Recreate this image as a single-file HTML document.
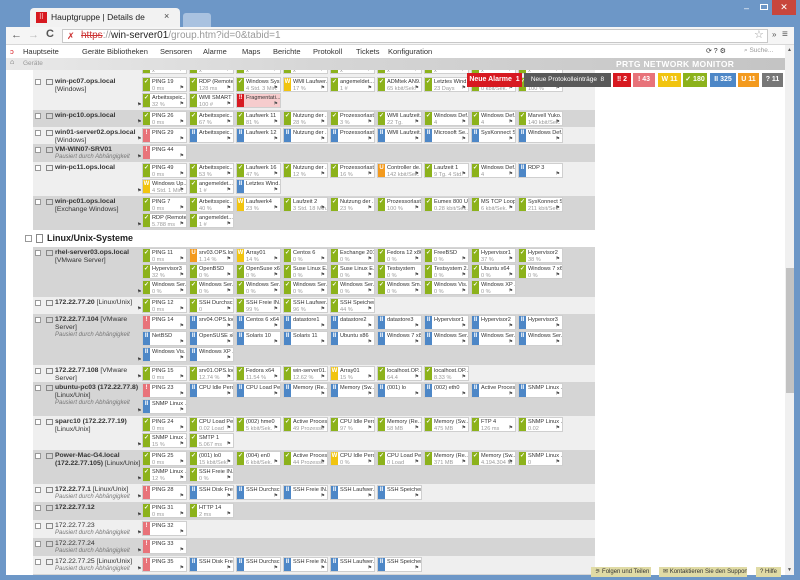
<!DOCTYPE html>
<html><head><meta charset="utf-8"><style>
*{box-sizing:border-box;margin:0;padding:0}
body{width:800px;height:580px;overflow:hidden;background:#6d97c7;font-family:"Liberation Sans",sans-serif;position:relative}
.abs{position:absolute}
#win{position:absolute;left:6px;top:27px;width:788px;height:548px;background:#fff;overflow:hidden}
#tb{position:absolute;left:0;top:0;width:788px;height:18px;background:#f5f5f5;border-bottom:1px solid #d8d8d8}
#url{position:absolute;left:56px;top:2px;width:706px;height:14px;background:#fff;border:1px solid #c8c8c8;font-size:10px;line-height:12px;padding-left:18px;color:#999}
#menu{position:absolute;left:0;top:18px;width:779px;height:13px;background:#fff;font-size:7.5px;color:#333}
#menu span{position:absolute;top:2px;white-space:nowrap}
#bc{position:absolute;left:0;top:31px;width:779px;height:12px;background:linear-gradient(90deg,#e9e9e9 0%,#d6d6d6 40%,#c4c4c4 100%)}
#content{position:absolute;left:0;top:43px;width:779px;height:505px;overflow:hidden;background:#fff}
.d{position:absolute;left:27px;width:562px}
.L{background:#efefef}.D{background:#d5d5d5}
.n{position:absolute;left:22px;top:2px;font-size:6.8px;line-height:8px;color:#333;font-weight:bold;white-space:nowrap}
.n i{font-weight:normal;font-style:italic;color:#777;font-size:6px;display:block;line-height:7.5px}
.n s{text-decoration:none;font-weight:normal}
.x{position:absolute;left:2px;top:3px;width:6px;height:6px;border:1px solid #999;background:#fff}
.ic{position:absolute;left:13px;top:3px;width:7px;height:6px;border:1px solid #888}
.fl{position:absolute;left:104px;bottom:2px;font-size:5px;color:#444}
.ts{position:absolute;left:109px;top:1px;width:430px;font-size:0;line-height:0}
.t{position:relative;display:inline-block;width:45px;height:15px;background:#fff;border:1px solid #cfcfcf;margin:0 2px 1px 0;vertical-align:top;overflow:hidden;font-size:5.6px;line-height:6.5px;color:#333;padding:1px 0 0 9px;white-space:nowrap}
.t b{position:absolute;left:0;top:0;width:7px;height:15px;color:#fff;font-size:6px;text-align:center;line-height:8px}
.t u{text-decoration:none;color:#9a9a9a;display:block}
.t::after{content:"⚑";position:absolute;right:2px;bottom:0;font-size:5px;color:#555}
.g b{background:#8cb21b}.b b{background:#4d87c7}.r b{background:#e8737a}.y b{background:#f1c40f}.o b{background:#f39a1e}.R b{background:#d71920}.R{background:#f6cccd}
.bd{position:absolute;top:73px;height:14px;font-size:7px;line-height:14px;color:#fff;text-align:center;font-weight:bold;white-space:nowrap;overflow:hidden}
.fb{position:absolute;top:567px;height:10px;background:#e0dba5;font-size:6px;line-height:10px;color:#333;padding:0 4px;white-space:nowrap;overflow:hidden}
</style></head><body>
<div class="abs" style="left:30px;top:8px;width:150px;height:20px;background:#f2f2f2;border-radius:4px 4px 0 0"></div>
<div class="abs" style="left:36px;top:12px;width:11px;height:11px;background:#d71920;color:#fff;font-size:7px;text-align:center;line-height:11px">⠿</div>
<div class="abs" style="left:51px;top:12px;font-size:8.5px;color:#222">Hauptgruppe | Details de</div>
<div class="abs" style="left:164px;top:11px;font-size:9px;color:#444">×</div>
<div class="abs" style="left:183px;top:13px;width:28px;height:14px;background:#a9c2e0;border-radius:3px 3px 0 0"></div>
<div class="abs" style="left:744px;top:3px;font-size:9px;color:#fff">–</div>
<div class="abs" style="left:760px;top:4px;width:8px;height:6px;border:1px solid #fff"></div>
<div class="abs" style="left:772px;top:0;width:24px;height:15px;background:#c8463c;color:#fff;font-size:9px;text-align:center;line-height:15px">✕</div>
<div id="win">
 <div id="tb">
  <div class="abs" style="left:5px;top:2px;font-size:11px;color:#555">←</div>
  <div class="abs" style="left:22px;top:2px;font-size:11px;color:#bbb">→</div>
  <div class="abs" style="left:40px;top:1px;font-size:11px;color:#555;font-weight:bold">C</div>
  <div id="url"><span style="position:absolute;left:4px;top:0;color:#c33;font-size:9px">✗</span><span style="color:#c33;text-decoration:line-through">https</span>://<span style="color:#222">win-server01</span>/group.htm?id=0&amp;tabid=1</div>
  <div class="abs" style="left:748px;top:1px;font-size:11px;color:#999">☆</div>
  <div class="abs" style="left:766px;top:3px;font-size:8px;color:#555">»</div>
  <div class="abs" style="left:776px;top:2px;font-size:10px;color:#555">≡</div>
 </div>
 <div id="menu">
  <span style="left:4px;color:#d71920">ↄ</span>
  <span style="left:17px">Hauptseite</span><span style="left:76px">Geräte</span><span style="left:101px">Bibliotheken</span><span style="left:154px">Sensoren</span><span style="left:197px">Alarme</span><span style="left:236px">Maps</span><span style="left:267px">Berichte</span><span style="left:307px">Protokoll</span><span style="left:350px">Tickets</span><span style="left:382px">Konfiguration</span>
  <span style="left:700px;font-size:7px">⟳ ? ⚙</span>
  <span style="left:738px;font-size:6.5px;color:#999">⌕ Suche...</span>
 </div>
 <div id="bc">
  <span class="abs" style="left:4px;top:1px;font-size:7px;color:#555">⌂</span>
  <span class="abs" style="left:17px;top:2px;font-size:6.5px;color:#999">Geräte</span>
  <span class="abs" style="left:610px;top:1px;font-size:8.5px;color:#fff;font-weight:bold;letter-spacing:.3px">PRTG NETWORK MONITOR</span>
 </div>
 <div id="content">
  <div class="d L" style="top:-28px;height:34px"><div class="ts">
   <div class="t g"><b>✓</b>x<br><u>x</u></div><div class="t g"><b>✓</b>x<br><u>x</u></div><div class="t g"><b>✓</b>x<br><u>x</u></div><div class="t g"><b>✓</b>x<br><u>x</u></div><div class="t g"><b>✓</b>x<br><u>x</u></div><div class="t g"><b>✓</b>x<br><u>x</u></div><div class="t g"><b>✓</b>x<br><u>x</u></div><div class="t g"><b>✓</b>x<br><u>x</u></div><div class="t g"><b>✓</b>x<br><u>x</u></div>
   <div class="t g"><b>✓</b>x<br><u>x</u></div><div class="t g"><b>✓</b>x<br><u>x</u></div><div class="t g"><b>✓</b>x<br><u>x</u></div><div class="t g"><b>✓</b>x<br><u>x</u></div><div class="t g"><b>✓</b>x<br><u>x</u></div><div class="t g"><b>✓</b>x<br><u>x</u></div><div class="t g"><b>✓</b>x<br><u>x</u></div><div class="t g"><b>✓</b>x<br><u>x</u></div><div class="t g"><b>✓</b>x<br><u>x</u></div>
  </div></div>

  <div class="d L" style="top:6px;height:34px"><span class="x"></span><span class="ic"></span><div class="n">win-pc07.ops.local<br><s>[Windows]</s></div><span class="fl">⚑</span><div class="ts">
   <div class="t g"><b>✓</b>PING 19<u>0 ms</u></div><div class="t g"><b>✓</b>RDP (Remote...<u>128 ms</u></div><div class="t g"><b>✓</b>Windows Sys...<u>4 Std. 3 Min.</u></div><div class="t y"><b>W</b>WMI Laufwer...<u>17 %</u></div><div class="t g"><b>✓</b>angemeldet...<u>1 #</u></div><div class="t g"><b>✓</b>ADMtek AN9...<u>65 kbit/Sek.</u></div><div class="t g"><b>✓</b>Letztes Wind...<u>23 Days</u></div><div class="t g"><b>✓</b>Netzwerk<u>0 kbit/Sek.</u></div><div class="t g"><b>✓</b>Verfügbar<u>100 %</u></div>
   <div class="t g"><b>✓</b>Arbeitsspeic...<u>32 %</u></div><div class="t g"><b>✓</b>WMI SMART ...<u>100 #</u></div><div class="t R"><b>‼</b>Fragmentati...<u>&nbsp;</u></div>
  </div></div>

  <div class="d D" style="top:40px;height:17px"><span class="x"></span><span class="ic"></span><div class="n">win-pc10.ops.local</div><span class="fl">⚑</span><div class="ts">
   <div class="t g"><b>✓</b>PING 26<u>0 ms</u></div><div class="t g"><b>✓</b>Arbeitsspeic...<u>67 %</u></div><div class="t g"><b>✓</b>Laufwerk 11<u>81 %</u></div><div class="t g"><b>✓</b>Nutzung der ...<u>28 %</u></div><div class="t g"><b>✓</b>Prozessorlast...<u>3 %</u></div><div class="t g"><b>✓</b>WMI Laufzeit...<u>22 Tg.</u></div><div class="t g"><b>✓</b>Windows Def...<u>4</u></div><div class="t g"><b>✓</b>Windows Def...<u>4</u></div><div class="t g"><b>✓</b>Marvell Yuko...<u>140 kbit/Sek.</u></div>
  </div></div>

  <div class="d L" style="top:57px;height:17px"><span class="x"></span><span class="ic"></span><div class="n">win01-server02.ops.local<br><s>[Windows]</s></div><span class="fl">⚑</span><div class="ts">
   <div class="t r"><b>!</b>PING 29</div><div class="t b"><b>II</b>Arbeitsspeic...</div><div class="t b"><b>II</b>Laufwerk 12</div><div class="t b"><b>II</b>Nutzung der ...</div><div class="t b"><b>II</b>Prozessorlast...</div><div class="t b"><b>II</b>WMI Laufzeit...</div><div class="t b"><b>II</b>Microsoft Se...</div><div class="t b"><b>II</b>SysKonnect S...</div><div class="t b"><b>II</b>Windows Def...</div>
  </div></div>

  <div class="d D" style="top:74px;height:18px"><span class="x"></span><span class="ic"></span><div class="n">VM-WIN07-SRV01<i>Pausiert durch Abhängigkeit</i></div><span class="fl">⚑</span><div class="ts">
   <div class="t r"><b>!</b>PING 44</div>
  </div></div>

  <div class="d L" style="top:92px;height:34px"><span class="x"></span><span class="ic"></span><div class="n">win-pc11.ops.local</div><span class="fl">⚑</span><div class="ts">
   <div class="t g"><b>✓</b>PING 49<u>0 ms</u></div><div class="t g"><b>✓</b>Arbeitsspeic...<u>53 %</u></div><div class="t g"><b>✓</b>Laufwerk 16<u>47 %</u></div><div class="t g"><b>✓</b>Nutzung der ...<u>12 %</u></div><div class="t g"><b>✓</b>Prozessorlast...<u>16 %</u></div><div class="t o"><b>U</b>Controller de...<u>142 kbit/Sek.</u></div><div class="t g"><b>✓</b>Laufzeit 1<u>9 Tg. 4 Std.</u></div><div class="t g"><b>✓</b>Windows Def...<u>4</u></div><div class="t b"><b>II</b>RDP 3</div>
   <div class="t y"><b>W</b>Windows Up...<u>4 Std. 1 Min.</u></div><div class="t g"><b>✓</b>angemeldet...<u>1 #</u></div><div class="t b"><b>II</b>Letztes Wind...</div>
  </div></div>

  <div class="d D" style="top:126px;height:34px"><span class="x"></span><span class="ic"></span><div class="n">win-pc01.ops.local<br><s>[Exchange Windows]</s></div><span class="fl">⚑</span><div class="ts">
   <div class="t g"><b>✓</b>PING 7<u>0 ms</u></div><div class="t g"><b>✓</b>Arbeitsspeic...<u>40 %</u></div><div class="t y"><b>W</b>Laufwerk4<u>23 %</u></div><div class="t g"><b>✓</b>Laufzeit 2<u>3 Std. 18 Min.</u></div><div class="t g"><b>✓</b>Nutzung der ...<u>23 %</u></div><div class="t g"><b>✓</b>Prozessorlast 4<u>100 %</u></div><div class="t g"><b>✓</b>Eumex 800 U...<u>0.28 kbit/Sek.</u></div><div class="t g"><b>✓</b>MS TCP Loop...<u>6 kbit/Sek.</u></div><div class="t g"><b>✓</b>SysKonnect S...<u>211 kbit/Sek.</u></div>
   <div class="t g"><b>✓</b>RDP (Remote...<u>5.788 ms</u></div><div class="t g"><b>✓</b>angemeldet...<u>1 #</u></div>
  </div></div>

  <span class="abs" style="left:19px;top:165px;width:7px;height:7px;border:1px solid #999"></span>
  <span class="abs" style="left:30px;top:164px;width:7px;height:9px;border:1px solid #888"></span>
  <div class="abs" style="left:41px;top:163px;font-size:9px;font-weight:bold;color:#222">Linux/Unix-Systeme</div>

  <div class="d D" style="top:177px;height:50px"><span class="x"></span><span class="ic"></span><div class="n">rhel-server03.ops.local<br><s>[VMware Server]</s></div><span class="fl">⚑</span><div class="ts">
   <div class="t g"><b>✓</b>PING 11<u>0 ms</u></div><div class="t o"><b>U</b>srv03.OPS.local<u>1.14 %</u></div><div class="t y"><b>W</b>Array01<u>14 %</u></div><div class="t g"><b>✓</b>Centos 6<u>0 %</u></div><div class="t g"><b>✓</b>Exchange 2010<u>0 %</u></div><div class="t g"><b>✓</b>Fedora 12 x86<u>0 %</u></div><div class="t g"><b>✓</b>FreeBSD<u>0 %</u></div><div class="t g"><b>✓</b>Hypervisor1<u>37 %</u></div><div class="t g"><b>✓</b>Hypervisor2<u>38 %</u></div>
   <div class="t g"><b>✓</b>Hypervisor3<u>32 %</u></div><div class="t g"><b>✓</b>OpenBSD<u>0 %</u></div><div class="t g"><b>✓</b>OpenSuse x64<u>0 %</u></div><div class="t g"><b>✓</b>Suse Linux E...<u>0 %</u></div><div class="t g"><b>✓</b>Suse Linux E...<u>0 %</u></div><div class="t g"><b>✓</b>Testsystem<u>0 %</u></div><div class="t g"><b>✓</b>Testsystem 2...<u>0 %</u></div><div class="t g"><b>✓</b>Ubuntu x64<u>0 %</u></div><div class="t g"><b>✓</b>Windows 7 x64<u>0 %</u></div>
   <div class="t g"><b>✓</b>Windows Ser...<u>0 %</u></div><div class="t g"><b>✓</b>Windows Ser...<u>0 %</u></div><div class="t g"><b>✓</b>Windows Ser...<u>0 %</u></div><div class="t g"><b>✓</b>Windows Ser...<u>0 %</u></div><div class="t g"><b>✓</b>Windows Ser...<u>0 %</u></div><div class="t g"><b>✓</b>Windows Sm...<u>0 %</u></div><div class="t g"><b>✓</b>Windows Vis...<u>0 %</u></div><div class="t g"><b>✓</b>Windows XP ...<u>0 %</u></div>
  </div></div>

  <div class="d L" style="top:227px;height:17px"><span class="x"></span><span class="ic"></span><div class="n">172.22.77.20 <s>[Linux/Unix]</s></div><span class="fl">⚑</span><div class="ts">
   <div class="t g"><b>✓</b>PING 12<u>0 ms</u></div><div class="t g"><b>✓</b>SSH Durchsc...<u>0</u></div><div class="t g"><b>✓</b>SSH Freie IN...<u>99 %</u></div><div class="t g"><b>✓</b>SSH Laufwer...<u>96 %</u></div><div class="t g"><b>✓</b>SSH Speicher...<u>44 %</u></div>
  </div></div>

  <div class="d D" style="top:244px;height:51px"><span class="x"></span><span class="ic"></span><div class="n">172.22.77.104 <s>[VMware<br>Server]</s><i>Pausiert durch Abhängigkeit</i></div><span class="fl">⚑</span><div class="ts">
   <div class="t r"><b>!</b>PING 14</div><div class="t b"><b>II</b>srv04.OPS.local</div><div class="t b"><b>II</b>Centos 6 x64</div><div class="t b"><b>II</b>datastore1</div><div class="t b"><b>II</b>datastore2</div><div class="t b"><b>II</b>datastore3</div><div class="t b"><b>II</b>Hypervisor1</div><div class="t b"><b>II</b>Hypervisor2</div><div class="t b"><b>II</b>Hypervisor3</div>
   <div class="t b"><b>II</b>NetBSD</div><div class="t b"><b>II</b>OpenSUSE x86</div><div class="t b"><b>II</b>Solaris 10</div><div class="t b"><b>II</b>Solaris 11</div><div class="t b"><b>II</b>Ubuntu x86</div><div class="t b"><b>II</b>Windows 7 x86</div><div class="t b"><b>II</b>Windows Ser...</div><div class="t b"><b>II</b>Windows Ser...</div><div class="t b"><b>II</b>Windows Ser...</div>
   <div class="t b"><b>II</b>Windows Vis...</div><div class="t b"><b>II</b>Windows XP ...</div>
  </div></div>

  <div class="d L" style="top:295px;height:17px"><span class="x"></span><span class="ic"></span><div class="n">172.22.77.108 <s>[VMware<br>Server]</s></div><span class="fl">⚑</span><div class="ts">
   <div class="t g"><b>✓</b>PING 15<u>0 ms</u></div><div class="t g"><b>✓</b>srv01.OPS.local<u>12.74 %</u></div><div class="t g"><b>✓</b>Fedora x64<u>11.54 %</u></div><div class="t g"><b>✓</b>win-server01...<u>12.62 %</u></div><div class="t y"><b>W</b>Array01<u>15 %</u></div><div class="t g"><b>✓</b>localhost.OP...<u>64.4</u></div><div class="t g"><b>✓</b>localhost.OP...<u>8.33 %</u></div>
  </div></div>

  <div class="d D" style="top:312px;height:34px"><span class="x"></span><span class="ic"></span><div class="n">ubuntu-pc03 (172.22.77.8)<br><s>[Linux/Unix]</s><i>Pausiert durch Abhängigkeit</i></div><span class="fl">⚑</span><div class="ts">
   <div class="t r"><b>!</b>PING 23</div><div class="t b"><b>II</b>CPU Idle Perc...</div><div class="t b"><b>II</b>CPU Load Pe...</div><div class="t b"><b>II</b>Memory (Re...</div><div class="t b"><b>II</b>Memory (Sw...</div><div class="t b"><b>II</b>(001) lo</div><div class="t b"><b>II</b>(002) eth0</div><div class="t b"><b>II</b>Active Proces...</div><div class="t b"><b>II</b>SNMP Linux ...</div>
   <div class="t b"><b>II</b>SNMP Linux ...</div>
  </div></div>

  <div class="d L" style="top:346px;height:34px"><span class="x"></span><span class="ic"></span><div class="n">sparc10 (172.22.77.19)<br><s>[Linux/Unix]</s></div><span class="fl">⚑</span><div class="ts">
   <div class="t g"><b>✓</b>PING 24<u>0 ms</u></div><div class="t g"><b>✓</b>CPU Load Pe...<u>0.02 Load</u></div><div class="t g"><b>✓</b>(002) hme0<u>5 kbit/Sek.</u></div><div class="t g"><b>✓</b>Active Proces...<u>49 Prozesse</u></div><div class="t g"><b>✓</b>CPU Idle Perc...<u>97 %</u></div><div class="t g"><b>✓</b>Memory (Re...<u>58 MB</u></div><div class="t g"><b>✓</b>Memory (Sw...<u>475 MB</u></div><div class="t g"><b>✓</b>FTP 4<u>126 ms</u></div><div class="t g"><b>✓</b>SNMP Linux ...<u>0.02</u></div>
   <div class="t g"><b>✓</b>SNMP Linux ...<u>15 %</u></div><div class="t g"><b>✓</b>SMTP 1<u>5.067 ms</u></div>
  </div></div>

  <div class="d D" style="top:380px;height:34px"><span class="x"></span><span class="ic"></span><div class="n">Power-Mac-G4.local<br>(172.22.77.105) <s>[Linux/Unix]</s></div><span class="fl">⚑</span><div class="ts">
   <div class="t g"><b>✓</b>PING 25<u>0 ms</u></div><div class="t g"><b>✓</b>(001) lo0<u>15 kbit/Sek.</u></div><div class="t g"><b>✓</b>(004) en0<u>6 kbit/Sek.</u></div><div class="t g"><b>✓</b>Active Proces...<u>44 Prozesse</u></div><div class="t y"><b>W</b>CPU Idle Perc...<u>0 %</u></div><div class="t g"><b>✓</b>CPU Load Pe...<u>0 Load</u></div><div class="t g"><b>✓</b>Memory (Re...<u>371 MB</u></div><div class="t g"><b>✓</b>Memory (Sw...<u>4.194.304 M</u></div><div class="t g"><b>✓</b>SNMP Linux ...<u>0</u></div>
   <div class="t g"><b>✓</b>SNMP Linux ...<u>12 %</u></div><div class="t g"><b>✓</b>SSH Freie IN...<u>0 %</u></div>
  </div></div>

  <div class="d L" style="top:414px;height:18px"><span class="x"></span><span class="ic"></span><div class="n">172.22.77.1 <s>[Linux/Unix]</s><i>Pausiert durch Abhängigkeit</i></div><span class="fl">⚑</span><div class="ts">
   <div class="t r"><b>!</b>PING 28</div><div class="t b"><b>II</b>SSH Disk Free 3</div><div class="t b"><b>II</b>SSH Durchsc...</div><div class="t b"><b>II</b>SSH Freie IN...</div><div class="t b"><b>II</b>SSH Laufwer...</div><div class="t b"><b>II</b>SSH Speicher...</div>
  </div></div>

  <div class="d D" style="top:432px;height:18px"><span class="x"></span><span class="ic"></span><div class="n">172.22.77.12</div><span class="fl">⚑</span><div class="ts">
   <div class="t g"><b>✓</b>PING 31<u>0 ms</u></div><div class="t g"><b>✓</b>HTTP 14<u>2 ms</u></div>
  </div></div>

  <div class="d L" style="top:450px;height:18px"><span class="x"></span><span class="ic"></span><div class="n"><s>172.22.77.23</s><i>Pausiert durch Abhängigkeit</i></div><span class="fl">⚑</span><div class="ts">
   <div class="t r"><b>!</b>PING 32</div>
  </div></div>

  <div class="d D" style="top:468px;height:18px"><span class="x"></span><span class="ic"></span><div class="n"><s>172.22.77.24</s><i>Pausiert durch Abhängigkeit</i></div><span class="fl">⚑</span><div class="ts">
   <div class="t r"><b>!</b>PING 33</div>
  </div></div>

  <div class="d L" style="top:486px;height:18px"><span class="x"></span><span class="ic"></span><div class="n"><s>172.22.77.25 [Linux/Unix]</s><i>Pausiert durch Abhängigkeit</i></div><span class="fl">⚑</span><div class="ts">
   <div class="t r"><b>!</b>PING 35</div><div class="t b"><b>II</b>SSH Disk Free 4</div><div class="t b"><b>II</b>SSH Durchsc...</div><div class="t b"><b>II</b>SSH Freie IN...</div><div class="t b"><b>II</b>SSH Laufwer...</div><div class="t b"><b>II</b>SSH Speicher...</div>
  </div></div>

  <div class="d D" style="top:504px;height:18px"><span class="x"></span><span class="ic"></span><div class="n"><s>172.22.77.26</s></div></div>
 </div>
 <div class="abs" style="left:779px;top:18px;width:9px;height:530px;background:#f0f0f0"></div>
 <div class="abs" style="left:780px;top:241px;width:8px;height:125px;background:#c2c2c2"></div>
 <div class="abs" style="left:781px;top:20px;font-size:5px;color:#555">▲</div>
 <div class="abs" style="left:781px;top:540px;font-size:5px;color:#555">▼</div>
</div>
<div class="bd" style="left:467px;width:55px;background:#d71920">Neue Alarme &nbsp;1</div>
<div class="bd" style="left:524px;width:87px;background:#595959;font-weight:normal;font-size:6.5px">Neue Protokolleinträge &nbsp;8</div>
<div class="bd" style="left:613px;width:18px;background:#d71920">‼ 2</div>
<div class="bd" style="left:633px;width:22px;background:#e8737a">! 43</div>
<div class="bd" style="left:658px;width:23px;background:#f1c40f">W 11</div>
<div class="bd" style="left:683px;width:24px;background:#8cb21b">✓ 180</div>
<div class="bd" style="left:710px;width:26px;background:#4d87c7">II 325</div>
<div class="bd" style="left:738px;width:21px;background:#f39a1e">U 11</div>
<div class="bd" style="left:762px;width:21px;background:#777">? 11</div>
<div class="fb" style="left:591px;width:60px">⚞ Folgen und Teilen</div>
<div class="fb" style="left:659px;width:88px">✉ Kontaktieren Sie den Support</div>
<div class="fb" style="left:756px;width:25px">? Hilfe</div>
</body></html>
